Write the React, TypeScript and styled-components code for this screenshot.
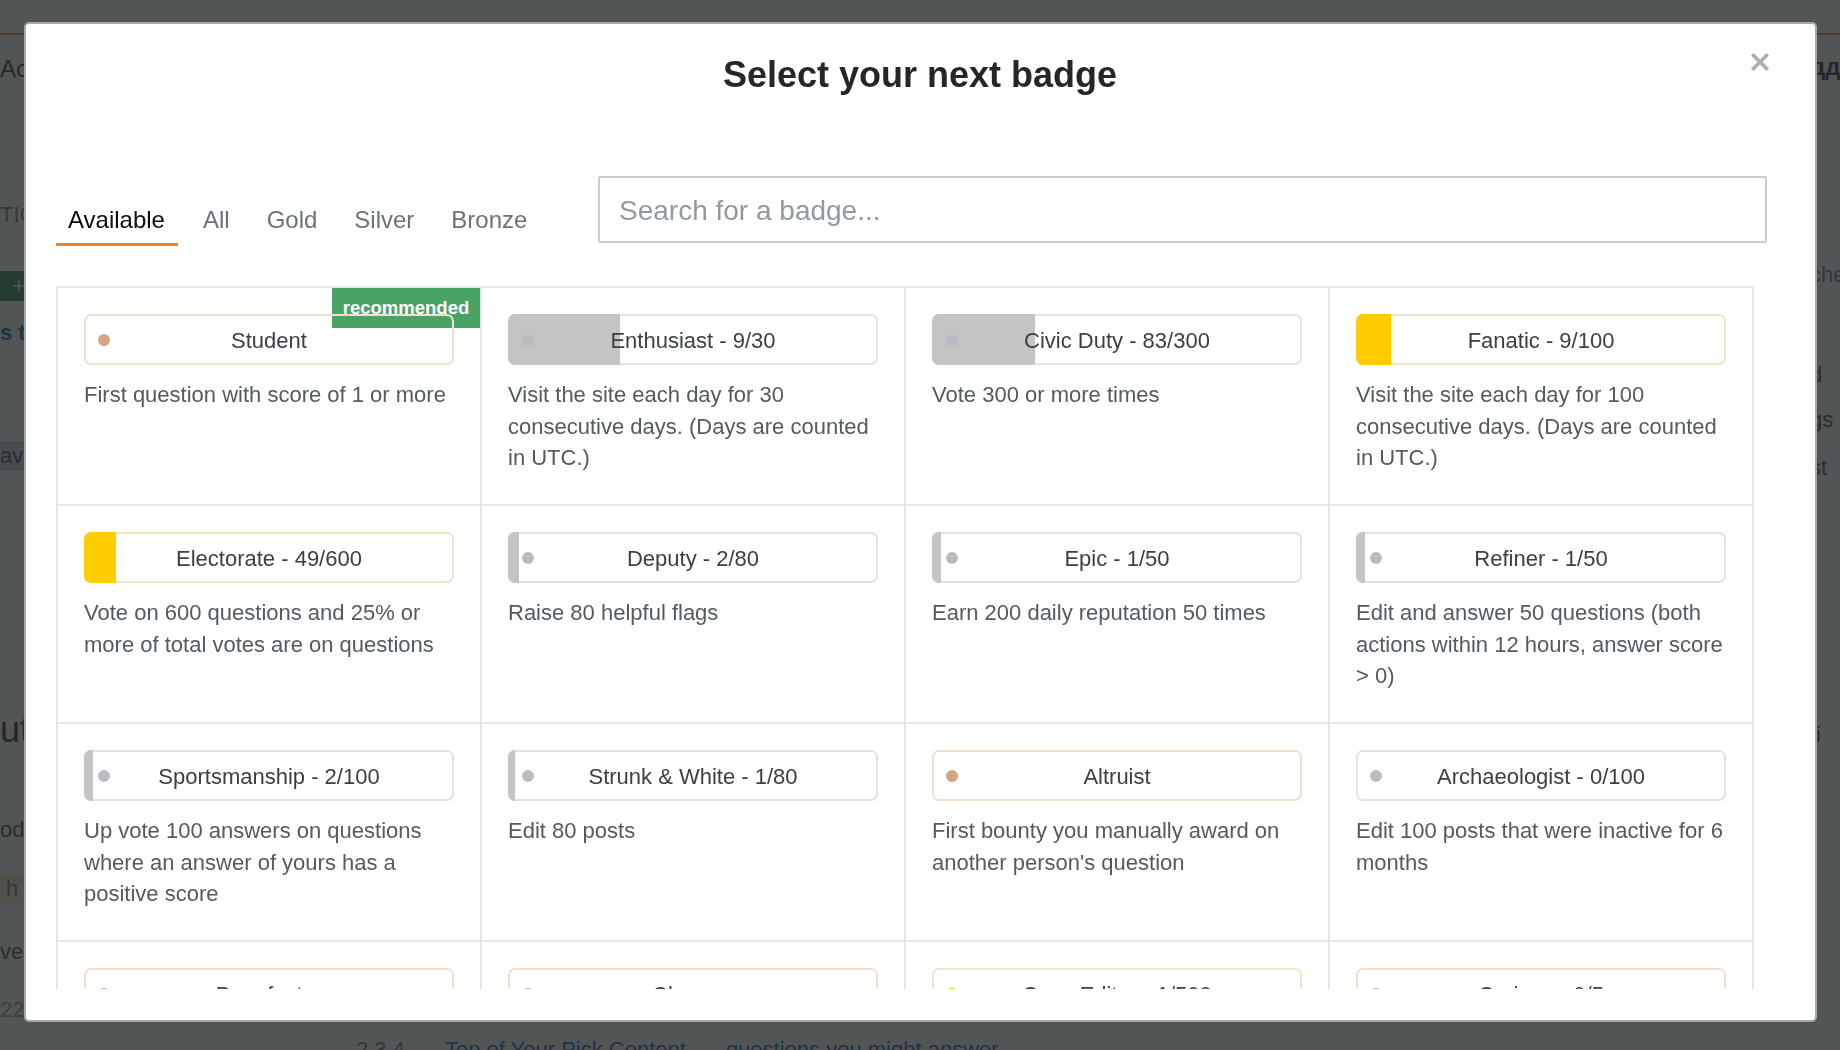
import React from "react";
import styled, { createGlobalStyle, css } from "styled-components";

type Tier = "bronze" | "silver" | "gold";

interface Badge {
  name: string;
  tier: Tier;
  desc: string;
  progress?: [number, number];
  recommended?: boolean;
}

const badges: Badge[] = [
  { name: "Student", tier: "bronze", desc: "First question with score of 1 or more", recommended: true },
  { name: "Enthusiast", tier: "silver", progress: [9, 30], desc: "Visit the site each day for 30 consecutive days. (Days are counted in UTC.)" },
  { name: "Civic Duty", tier: "silver", progress: [83, 300], desc: "Vote 300 or more times" },
  { name: "Fanatic", tier: "gold", progress: [9, 100], desc: "Visit the site each day for 100 consecutive days. (Days are counted in UTC.)" },
  { name: "Electorate", tier: "gold", progress: [49, 600], desc: "Vote on 600 questions and 25% or more of total votes are on questions" },
  { name: "Deputy", tier: "silver", progress: [2, 80], desc: "Raise 80 helpful flags" },
  { name: "Epic", tier: "silver", progress: [1, 50], desc: "Earn 200 daily reputation 50 times" },
  { name: "Refiner", tier: "silver", progress: [1, 50], desc: "Edit and answer 50 questions (both actions within 12 hours, answer score > 0)" },
  { name: "Sportsmanship", tier: "silver", progress: [2, 100], desc: "Up vote 100 answers on questions where an answer of yours has a positive score" },
  { name: "Strunk & White", tier: "silver", progress: [1, 80], desc: "Edit 80 posts" },
  { name: "Altruist", tier: "bronze", desc: "First bounty you manually award on another person's question" },
  { name: "Archaeologist", tier: "silver", progress: [0, 100], desc: "Edit 100 posts that were inactive for 6 months" },
  { name: "Benefactor", tier: "bronze", desc: "First bounty you manually award on your own question" },
  { name: "Cleanup", tier: "bronze", desc: "First rollback" },
  { name: "Copy Editor", tier: "gold", progress: [1, 500], desc: "Edit 500 posts (excluding own or deleted posts and tag edits)" },
  { name: "Curious", tier: "bronze", progress: [0, 5], desc: "Ask a well-received question on 5 separate days, and maintain a positive question record" },
  { name: "Commentator", tier: "bronze", progress: [3, 10], desc: "Leave 10 comments" },
  { name: "Critic", tier: "bronze", desc: "First down vote" },
  { name: "Custodian", tier: "bronze", desc: "Complete at least one review task. This badge is awarded once per review type" },
  { name: "Disciplined", tier: "bronze", desc: "Delete own post with score of 3 or higher" },
  { name: "Editor", tier: "bronze", desc: "First edit" },
  { name: "Explainer", tier: "bronze", progress: [0, 1], desc: "Edit and answer 1 question (both actions within 12 hours, answer score > 0)" },
  { name: "Informed", tier: "bronze", desc: "Read the entire tour page" },
  { name: "Investor", tier: "bronze", desc: "First bounty you manually award on another person's question" },
  { name: "Organizer", tier: "bronze", desc: "First retag" },
  { name: "Peer Pressure", tier: "bronze", desc: "Delete own post with score of -3 or lower" },
  { name: "Promoter", tier: "bronze", desc: "First bounty you offer on your own question" },
  { name: "Proofreader", tier: "silver", progress: [12, 100], desc: "Approve or reject 100 suggested edits" },
  { name: "Scholar", tier: "bronze", desc: "Ask a question and accept an answer" },
  { name: "Self-Learner", tier: "bronze", desc: "Answer your own question with score of 3 or more" },
  { name: "Supporter", tier: "bronze", desc: "First up vote" },
  { name: "Synonymizer", tier: "gold", progress: [0, 1], desc: "First tag synonym proposed that was approved" },
  { name: "Tag Editor", tier: "bronze", desc: "First tag wiki edit" },
  { name: "Talkative", tier: "bronze", progress: [0, 10], desc: "Post 10 messages, with 1 or more starred, in chat" },
  { name: "Teacher", tier: "bronze", desc: "Answer a question with score of 1 or more" },
  { name: "Tumbleweed", tier: "bronze", desc: "Asked a question with zero score, no answers, no comments, and low views for a week" },
];

const tierColors: Record<Tier, { border: string; fill: string; dot: string }> = {
  bronze: { border: "#f2dfcd", fill: "#e6c9ae", dot: "#d1a684" },
  silver: { border: "#e1e3e5", fill: "#c4c4c4", dot: "#b8bbc1" },
  gold: { border: "#efe6c8", fill: "#ffcc01", dot: "#ffcc01" },
};

const GlobalStyle = createGlobalStyle`
  html, body {
    margin: 0;
    padding: 0;
    width: 1840px;
    height: 1050px;
    overflow: hidden;
    background: #ffffff;
    font-family: "Liberation Sans", Arial, Helvetica, sans-serif;
  }
  * { box-sizing: border-box; }
`;

/* ---------- Background page (under the overlay) ---------- */

const Page = styled.div`
  width: 1840px;
  height: 1050px;
  display: flex;
  flex-direction: column;
  background: #ffffff;
  overflow: hidden;
`;

const PageTop = styled.div`
  height: 35px;
  border-bottom: 2px solid #f48024;
  flex: 0 0 auto;
`;

const PageBody = styled.div`
  flex: 1;
  display: flex;
  justify-content: space-between;
`;

const Strip = styled.div<{ $w: number }>`
  width: ${(p) => p.$w}px;
  overflow: hidden;
  display: flex;
  flex-direction: column;
`;

const StripText = styled.div<{ $mt: number; $size?: number; $color?: string; $bold?: boolean; $bg?: string }>`
  margin-top: ${(p) => p.$mt}px;
  font-size: ${(p) => p.$size ?? 22}px;
  line-height: ${(p) => (p.$size ?? 22) + 8}px;
  color: ${(p) => p.$color ?? "#3b4045"};
  font-weight: ${(p) => (p.$bold ? 700 : 400)};
  background: ${(p) => p.$bg ?? "transparent"};
  white-space: nowrap;
`;

const PageMid = styled.div`
  flex: 1;
  display: flex;
  flex-direction: column;
  justify-content: flex-end;
  padding: 0 0 0 330px;
  margin-bottom: -14px;
`;

const PageBottomLine = styled.div`
  display: flex;
  gap: 40px;
  font-size: 22px;
  line-height: 28px;
  white-space: nowrap;
`;

const PageLink = styled.span`
  color: #0a60a8;
`;

const PageMuted = styled.span`
  color: #6a737c;
`;

/* ---------- Modal ---------- */

const Overlay = styled.div`
  position: fixed;
  inset: 0;
  background: rgba(36, 39, 41, 0.79);
  padding: 24px 0 0 26px;
`;

const Modal = styled.div`
  position: relative;
  width: 1789px;
  height: 996px;
  background: #ffffff;
  border-radius: 3px;
  box-shadow: 0 0 0 2px #a4a8ae;
  padding: 29px 21px 0 30px;
  display: flex;
  flex-direction: column;
`;

const Title = styled.h1`
  margin: 0;
  padding-right: 10px;
  text-align: center;
  font-size: 36px;
  line-height: 44px;
  font-weight: 700;
  color: #242729;
`;

const CloseButton = styled.button`
  position: absolute;
  top: 29px;
  right: 46px;
  width: 18px;
  height: 18px;
  padding: 0;
  border: none;
  background: transparent;
  cursor: pointer;
  display: flex;
  align-items: center;
  justify-content: center;
`;

const Toolbar = styled.div`
  margin-top: 79px;
  display: flex;
  align-items: flex-start;
  padding-right: 27px;
`;

const Tabs = styled.div`
  margin-top: 29px;
  display: flex;
  gap: 13px;
`;

const Tab = styled.button<{ $active?: boolean }>`
  font-family: inherit;
  font-size: 24px;
  line-height: 30px;
  padding: 0 12px 8px;
  border: none;
  border-bottom: 3px solid ${(p) => (p.$active ? "#f48024" : "transparent")};
  background: transparent;
  color: ${(p) => (p.$active ? "#0c0d0e" : "#6a737c")};
  cursor: pointer;
  &:first-child {
    padding-right: 13px;
  }
`;

const SearchInput = styled.input`
  margin-left: auto;
  flex: 0 0 1169px;
  height: 67px;
  border: 2px solid #c8ccd0;
  border-radius: 2px;
  padding: 2px 18px 0 19px;
  font-family: inherit;
  font-size: 28px;
  color: #3b4045;
  outline: none;
  &::placeholder {
    color: #9199a1;
  }
`;

const Scroller = styled.div`
  margin-top: 40px;
  height: 703px;
  overflow-y: scroll;
  &::-webkit-scrollbar {
    width: 12px;
  }
  &::-webkit-scrollbar-track {
    background: #e6e8ea;
  }
  &::-webkit-scrollbar-thumb {
    background: #bcc1c6;
  }
`;

const Grid = styled.div`
  width: 1698px;
  display: grid;
  grid-template-columns: repeat(4, 424px);
  border-top: 2px solid #e4e6e8;
  border-left: 2px solid #e4e6e8;
`;

const Cell = styled.div`
  position: relative;
  height: 218px;
  padding: 26px 26px 0;
  border-right: 2px solid #e4e6e8;
  border-bottom: 2px solid #e4e6e8;
`;

const Ribbon = styled.div`
  position: absolute;
  top: 0;
  right: 0;
  width: 148px;
  height: 40px;
  background: #48a367;
  color: #ffffff;
  font-size: 18.5px;
  font-weight: 700;
  display: flex;
  align-items: center;
  justify-content: center;
`;

const Pill = styled.div<{ $tier: Tier }>`
  position: relative;
  height: 51px;
  border: 2px solid ${(p) => tierColors[p.$tier].border};
  border-radius: 7px;
  display: flex;
  align-items: center;
  justify-content: center;
`;

const Fill = styled.div<{ $tier: Tier }>`
  position: absolute;
  top: -2px;
  bottom: -2px;
  left: -2px;
  border-radius: 7px 0 0 7px;
  background: ${(p) => tierColors[p.$tier].fill};
`;

const Dot = styled.span<{ $tier: Tier; $hidden?: boolean }>`
  position: absolute;
  left: 12px;
  top: 50%;
  margin-top: -6px;
  width: 12px;
  height: 12px;
  border-radius: 50%;
  background: ${(p) => tierColors[p.$tier].dot};
  ${(p) =>
    p.$hidden &&
    css`
      opacity: 0;
    `}
`;

const PillLabel = styled.span`
  position: relative;
  padding-top: 2px;
  font-size: 22px;
  color: #3b4045;
  white-space: nowrap;
`;

const Desc = styled.p`
  margin: 14px 0 0;
  font-size: 22px;
  line-height: 31.7px;
  color: #535a60;
`;

const CloseIcon = () => (
  <svg width="18" height="18" viewBox="0 0 18 18" aria-hidden="true">
    <path d="M2.5 2.5 L15.5 15.5 M15.5 2.5 L2.5 15.5" stroke="#a9aeb3" strokeWidth="3.6" strokeLinecap="square" />
  </svg>
);

const BadgeCell: React.FC<{ badge: Badge }> = ({ badge }) => {
  const pct = badge.progress ? (badge.progress[0] / badge.progress[1]) * 100 : 0;
  const label = badge.progress ? `${badge.name} - ${badge.progress[0]}/${badge.progress[1]}` : badge.name;
  const fillPx = (pct / 100) * 369;
  return (
    <Cell>
      {badge.recommended && <Ribbon>recommended</Ribbon>}
      <Pill $tier={badge.tier}>
        {fillPx >= 2 && <Fill $tier={badge.tier} style={{ width: `calc(${pct}% + 2px)` }} />}
        <Dot $tier={badge.tier} $hidden={badge.tier === "gold" && fillPx > 24} />
        <PillLabel>{label}</PillLabel>
      </Pill>
      <Desc>{badge.desc}</Desc>
    </Cell>
  );
};

const tabs = ["Available", "All", "Gold", "Silver", "Bronze"];

export default function App() {
  return (
    <>
      <GlobalStyle />
      <Page>
        <PageTop />
        <PageBody>
          <Strip $w={26}>
            <StripText $mt={18} $size={24} $color="#242729">Activity</StripText>
            <StripText $mt={115} $size={22} $color="#6a737c">TIC</StripText>
            <StripText $mt={41} $size={22} $color="#ffffff" $bg="#2f8a4d">&nbsp;&nbsp;+</StripText>
            <StripText $mt={17} $size={22} $color="#0a60a8" $bold>s th</StripText>
            <StripText $mt={93} $size={22} $color="#3b4045" $bg="#c9d8e8">ava</StripText>
            <StripText $mt={237} $size={36} $color="#242729">ut</StripText>
            <StripText $mt={63} $size={22} $color="#3b4045">od</StripText>
            <StripText $mt={29} $size={22} $color="#6a737c" $bg="#f3edc8">&nbsp;h</StripText>
            <StripText $mt={33} $size={22} $color="#3b4045">ves</StripText>
            <StripText $mt={28} $size={22} $color="#9199a1">22</StripText>
          </Strip>
          <PageMid>
            <PageBottomLine>
              <PageMuted>2 3 4</PageMuted>
              <PageLink>Top of Your Pick Content</PageLink>
              <PageLink>questions you might answer</PageLink>
            </PageBottomLine>
          </PageMid>
          <Strip $w={30}>
            <StripText $mt={16} $size={24} $color="#242729" $bold>дд</StripText>
            <StripText $mt={177} $size={22} $color="#6a737c">che</StripText>
            <StripText $mt={70} $size={22} $color="#3b4045">d</StripText>
            <StripText $mt={15} $size={22} $color="#3b4045">gs</StripText>
            <StripText $mt={18} $size={22} $color="#3b4045">st</StripText>
            <StripText $mt={237} $size={22} $color="#3b4045">ti</StripText>
          </Strip>
        </PageBody>
      </Page>
      <Overlay>
        <Modal>
          <Title>Select your next badge</Title>
          <CloseButton aria-label="Close">
            <CloseIcon />
          </CloseButton>
          <Toolbar>
            <Tabs>
              {tabs.map((t, i) => (
                <Tab key={t} $active={i === 0}>
                  {t}
                </Tab>
              ))}
            </Tabs>
            <SearchInput placeholder="Search for a badge..." />
          </Toolbar>
          <Scroller>
            <Grid>
              {badges.map((b) => (
                <BadgeCell key={b.name} badge={b} />
              ))}
            </Grid>
          </Scroller>
        </Modal>
      </Overlay>
    </>
  );
}
